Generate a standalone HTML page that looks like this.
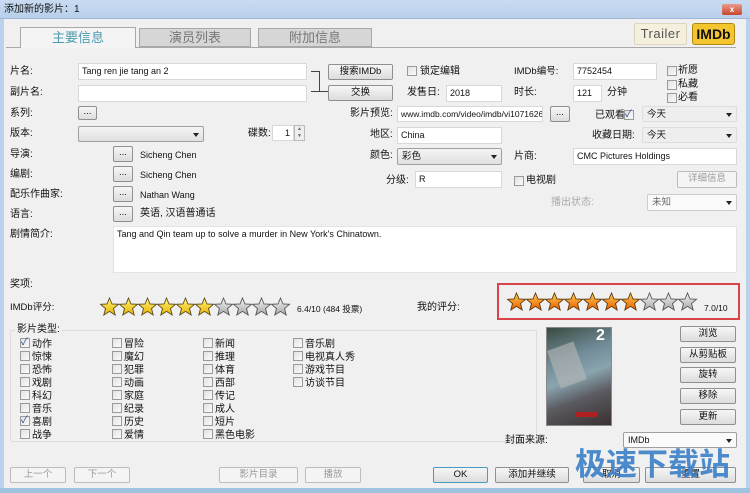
<!DOCTYPE html>
<html><head><meta charset="utf-8"><style>
*{box-sizing:border-box;margin:0;padding:0}
body{width:750px;height:493px;overflow:hidden;background:#f0f0f0;font-family:"Liberation Sans","Noto Sans CJK SC",sans-serif;font-size:10px;line-height:12px;color:#111;position:relative}
.a{position:absolute;white-space:nowrap}
.in{position:absolute;background:#fff;border:1px solid #d8d8d8;padding:2px 3px;font-size:9px;line-height:11px}
.btn{position:absolute;border:1px solid #8e8f8f;border-radius:2px;background:linear-gradient(#f6f6f6,#dcdcdc);text-align:center;font-size:9.5px;line-height:14px}
.dis{color:#9a9a9a;border-color:#bcbcbc;background:#f4f4f4}
.sel{position:absolute;border:1px solid #a0a0a0;border-radius:2px;background:linear-gradient(#f4f4f4,#e0e0e0);font-size:9.5px;padding:1px 4px;line-height:13px}
.sel:after{content:"";position:absolute;right:4px;top:6px;border:3px solid transparent;border-top:4px solid #222}
.cb{position:absolute;width:10px;height:10px;border:1px solid #9a9a9a;background:linear-gradient(135deg,#e2e2e2,#fafafa)}
.ck:after{content:"✓";position:absolute;left:0;top:-2px;font-size:10px;line-height:12px;color:#2a4a9a}
.g{position:absolute;font-size:10px;line-height:12px}
.g .cb{position:relative;display:inline-block;vertical-align:-1px;margin-right:2px}
</style></head><body>
<div class="a" style="left:0;top:0;width:750px;height:19px;background:linear-gradient(#c8dbf2,#b9cfea);border-bottom:1px solid #9fb6d4"></div>
<div class="a" style="left:4px;top:4px;font-size:10px">添加新的影片：1</div>
<div class="a" style="left:722px;top:4px;width:20px;height:11px;background:linear-gradient(#e99a8a,#c8452f);border-radius:2px;color:#fff;font-size:8px;text-align:center;line-height:11px;font-weight:bold">x</div>
<div class="a" style="left:0;top:19px;width:4px;height:474px;background:#bcd2ec"></div>
<div class="a" style="left:746px;top:19px;width:4px;height:474px;background:#bcd2ec"></div>
<div class="a" style="left:0;top:488px;width:750px;height:5px;background:#9fc2e0"></div>
<!-- tabs -->
<div class="a" style="left:6px;top:47px;width:730px;height:1px;background:#a8a8a8"></div>
<div class="a" style="left:20px;top:27px;width:116px;height:21px;background:#f4f4f4;border:1px solid #a8a8a8;border-bottom:none;color:#4a9ab0;font-size:13px;text-align:center;line-height:20px">主要信息</div>
<div class="a" style="left:139px;top:28px;width:112px;height:19px;background:#d6d6d6;border:1px solid #a8a8a8;color:#777;font-size:13px;text-align:center;line-height:18px">演员列表</div>
<div class="a" style="left:258px;top:28px;width:114px;height:19px;background:#d6d6d6;border:1px solid #a8a8a8;color:#777;font-size:13px;text-align:center;line-height:18px">附加信息</div>
<div class="a" style="left:634px;top:23px;width:53px;height:22px;background:#f5f0dd;border:1px solid #ddd6bd;border-radius:2px;font-size:13px;color:#555;text-align:center;line-height:20px;letter-spacing:.5px">Trailer</div>
<div class="a" style="left:692px;top:23px;width:43px;height:22px;background:#f3c52f;border:1px solid #b08a10;border-radius:3px;font-size:14px;font-weight:bold;text-align:center;line-height:20px">IMDb</div>
<!-- left labels -->
<div class="a" style="left:10px;top:66px">片名:</div>
<div class="a" style="left:10px;top:87px">副片名:</div>
<div class="a" style="left:10px;top:108px">系列:</div>
<div class="a" style="left:10px;top:128px">版本:</div>
<div class="a" style="left:10px;top:149px">导演:</div>
<div class="a" style="left:10px;top:169px">编剧:</div>
<div class="a" style="left:10px;top:189px">配乐作曲家:</div>
<div class="a" style="left:10px;top:209px">语言:</div>
<div class="a" style="left:10px;top:229px">剧情简介:</div>
<div class="a" style="left:10px;top:279px">奖项:</div>
<div class="a" style="left:10px;top:302px;font-size:9.5px">IMDb评分:</div>
<div class="in" style="left:78px;top:63px;width:229px;height:17px">Tang ren jie tang an 2</div>
<div class="in" style="left:78px;top:85px;width:229px;height:17px"></div>
<div class="a" style="left:311px;top:71px;width:9px;height:21px;border:1px solid #444;border-left:none"></div>
<div class="a" style="left:320px;top:91px;width:8px;height:1px;background:#444"></div>
<div class="btn" style="left:328px;top:64px;width:65px;height:16px">搜索IMDb</div>
<div class="btn" style="left:328px;top:85px;width:65px;height:16px">交换</div>
<div class="btn" style="left:78px;top:106px;width:19px;height:14px;line-height:10px">...</div>
<div class="sel" style="left:78px;top:126px;width:126px;height:16px"></div>
<div class="a" style="left:248px;top:128px">碟数:</div>
<div class="in" style="left:272px;top:125px;width:22px;height:16px;text-align:right">1</div>
<div class="a" style="left:294px;top:125px;width:11px;height:16px;border:1px solid #bbb;background:#eee;font-size:5px;line-height:7px;text-align:center;color:#666">▲<br>▼</div>
<div class="btn" style="left:113px;top:146px;width:20px;height:16px;line-height:12px">...</div>
<div class="btn" style="left:113px;top:166px;width:20px;height:16px;line-height:12px">...</div>
<div class="btn" style="left:113px;top:186px;width:20px;height:16px;line-height:12px">...</div>
<div class="btn" style="left:113px;top:206px;width:20px;height:16px;line-height:12px">...</div>
<div class="a" style="left:140px;top:149px;font-size:9px">Sicheng Chen</div>
<div class="a" style="left:140px;top:169px;font-size:9px">Sicheng Chen</div>
<div class="a" style="left:140px;top:189px;font-size:9px">Nathan Wang</div>
<div class="a" style="left:140px;top:208px">英语, 汉语普通话</div>
<div class="in" style="left:113px;top:226px;width:624px;height:47px;border-color:#e4e4e4">Tang and Qin team up to solve a murder in New York's Chinatown.</div>
<!-- middle -->
<div class="cb" style="left:407px;top:66px"></div><div class="a" style="left:420px;top:66px">锁定编辑</div>
<div class="a" style="left:407px;top:87px">发售日:</div>
<div class="in" style="left:446px;top:85px;width:56px;height:17px">2018</div>
<div class="a" style="left:350px;top:108px">影片预览:</div>
<div class="in" style="left:397px;top:106px;width:146px;height:16px;font-size:8.5px;overflow:hidden">www.imdb.com/video/imdb/vi10716263</div>
<div class="btn" style="left:550px;top:106px;width:20px;height:16px;line-height:12px">...</div>
<div class="a" style="left:370px;top:129px">地区:</div>
<div class="in" style="left:397px;top:127px;width:105px;height:17px">China</div>
<div class="a" style="left:370px;top:150px">颜色:</div>
<div class="sel" style="left:397px;top:148px;width:105px;height:17px">彩色</div>
<div class="a" style="left:386px;top:175px">分级:</div>
<div class="in" style="left:415px;top:171px;width:87px;height:17px">R</div>
<div class="cb" style="left:514px;top:176px"></div><div class="a" style="left:526px;top:175px">电视剧</div>
<!-- right -->
<div class="a" style="left:514px;top:66px;font-size:9.5px">IMDb编号:</div>
<div class="in" style="left:573px;top:63px;width:84px;height:17px">7752454</div>
<div class="a" style="left:514px;top:87px">时长:</div>
<div class="in" style="left:573px;top:85px;width:29px;height:17px">121</div>
<div class="a" style="left:607px;top:87px">分钟</div>
<div class="cb" style="left:667px;top:66px"></div><div class="a" style="left:678px;top:65px">祈愿</div>
<div class="cb" style="left:667px;top:80px"></div><div class="a" style="left:678px;top:79px">私藏</div>
<div class="cb" style="left:667px;top:93px"></div><div class="a" style="left:678px;top:92px">必看</div>
<div class="a" style="left:595px;top:110px">已观看</div>
<div class="cb ck" style="left:624px;top:110px"></div>
<div class="sel" style="left:642px;top:106px;width:95px;height:16px;border-color:#ddd;background:#eee">今天</div>
<div class="a" style="left:592px;top:130px">收藏日期:</div>
<div class="sel" style="left:642px;top:127px;width:95px;height:16px;border-color:#ddd;background:#eee">今天</div>
<div class="a" style="left:514px;top:151px">片商:</div>
<div class="in" style="left:573px;top:148px;width:164px;height:17px">CMC Pictures Holdings</div>
<div class="btn dis" style="left:677px;top:171px;width:60px;height:17px">详细信息</div>
<div class="a" style="left:551px;top:197px;color:#aaa">播出状态:</div>
<div class="sel" style="left:647px;top:194px;width:90px;height:17px;background:#fafafa;border-color:#ccc;color:#666">未知</div>
<!-- stars -->
<svg class="a" style="left:100px;top:297px" width="195" height="20" viewBox="0 0 195 20">
<defs><polygon id="s" points="9.5,1 12,7 18.5,7.3 13.5,11.5 15.2,18 9.5,14.4 3.8,18 5.5,11.5 0.5,7.3 7,7"/>
<linearGradient id="y" x1="0" y1="0" x2="0" y2="1"><stop offset="0" stop-color="#fff27a"/><stop offset="1" stop-color="#e7b400"/></linearGradient>
<linearGradient id="gr" x1="0" y1="0" x2="0" y2="1"><stop offset="0" stop-color="#f4f4f4"/><stop offset="1" stop-color="#a8a8a8"/></linearGradient>
<linearGradient id="o" x1="0" y1="0" x2="0" y2="1"><stop offset="0" stop-color="#ffd050"/><stop offset="1" stop-color="#e85a00"/></linearGradient></defs>
<g stroke="#5a4a20" stroke-width="0.9">
<use href="#s" x="0" fill="url(#y)"/><use href="#s" x="19" fill="url(#y)"/><use href="#s" x="38" fill="url(#y)"/><use href="#s" x="57" fill="url(#y)"/><use href="#s" x="76" fill="url(#y)"/><use href="#s" x="95" fill="url(#y)"/></g>
<g stroke="#555" stroke-width="0.9"><use href="#s" x="114" fill="url(#gr)"/><use href="#s" x="133" fill="url(#gr)"/><use href="#s" x="152" fill="url(#gr)"/><use href="#s" x="171" fill="url(#gr)"/></g>
</svg>
<div class="a" style="left:297px;top:303px;font-size:8.5px">6.4/10 (484 投票)</div>
<div class="a" style="left:417px;top:302px">我的评分:</div>
<div class="a" style="left:497px;top:283px;width:243px;height:37px;border:2px solid #d9434a"></div>
<svg class="a" style="left:507px;top:292px" width="195" height="20" viewBox="0 0 195 20">
<g stroke="#5a3a10" stroke-width="0.9">
<use href="#s" x="0" fill="url(#o)"/><use href="#s" x="19" fill="url(#o)"/><use href="#s" x="38" fill="url(#o)"/><use href="#s" x="57" fill="url(#o)"/><use href="#s" x="76" fill="url(#o)"/><use href="#s" x="95" fill="url(#o)"/><use href="#s" x="114" fill="url(#o)"/></g>
<g stroke="#555" stroke-width="0.9"><use href="#s" x="133" fill="url(#gr)"/><use href="#s" x="152" fill="url(#gr)"/><use href="#s" x="171" fill="url(#gr)"/></g>
</svg>
<div class="a" style="left:704px;top:302px;font-size:8.5px">7.0/10</div>
<!-- genres -->
<div class="a" style="left:10px;top:330px;width:527px;height:112px;border:1px solid #ddd;border-radius:2px"></div>
<div class="a" style="left:15px;top:324px;background:#f0f0f0;padding:0 2px">影片类型:</div>
<div class="g" style="left:20px;top:338px"><span class="cb ck"></span>动作<br><span class="cb"></span>惊悚<br><span class="cb"></span>恐怖<br><span class="cb"></span>戏剧<br><span class="cb"></span>科幻<br><span class="cb"></span>音乐<br><span class="cb ck"></span>喜剧<br><span class="cb"></span>战争</div>
<div class="g" style="left:112px;top:338px"><span class="cb"></span>冒险<br><span class="cb"></span>魔幻<br><span class="cb"></span>犯罪<br><span class="cb"></span>动画<br><span class="cb"></span>家庭<br><span class="cb"></span>纪录<br><span class="cb"></span>历史<br><span class="cb"></span>爱情</div>
<div class="g" style="left:203px;top:338px"><span class="cb"></span>新闻<br><span class="cb"></span>推理<br><span class="cb"></span>体育<br><span class="cb"></span>西部<br><span class="cb"></span>传记<br><span class="cb"></span>成人<br><span class="cb"></span>短片<br><span class="cb"></span>黑色电影</div>
<div class="g" style="left:293px;top:338px"><span class="cb"></span>音乐剧<br><span class="cb"></span>电视真人秀<br><span class="cb"></span>游戏节目<br><span class="cb"></span>访谈节目</div>
<!-- poster -->
<div class="a" style="left:546px;top:327px;width:66px;height:99px;background:linear-gradient(160deg,#3a4a40 0%,#6f8a96 30%,#8aa4ae 50%,#5a5a60 70%,#3a3030 100%);border:1px solid #888"></div>
<div class="a" style="left:553px;top:345px;width:28px;height:40px;background:#b8b8b8;opacity:.6;transform:rotate(-20deg)"></div>
<div class="a" style="left:596px;top:328px;color:#fff;font-weight:bold;font-size:16px;line-height:16px">2</div>
<div class="a" style="left:575px;top:412px;width:22px;height:5px;background:#b02020"></div>
<div class="btn" style="left:680px;top:326px;width:56px;height:16px">浏览</div>
<div class="btn" style="left:680px;top:347px;width:56px;height:16px">从剪贴板</div>
<div class="btn" style="left:680px;top:367px;width:56px;height:16px">旋转</div>
<div class="btn" style="left:680px;top:388px;width:56px;height:16px">移除</div>
<div class="btn" style="left:680px;top:409px;width:56px;height:16px">更新</div>
<div class="a" style="left:505px;top:435px">封面来源:</div>
<div class="sel" style="left:623px;top:432px;width:114px;height:16px;background:#fafafa;font-size:9px">IMDb</div>
<!-- bottom -->
<div class="btn dis" style="left:10px;top:467px;width:56px;height:16px">上一个</div>
<div class="btn dis" style="left:74px;top:467px;width:56px;height:16px">下一个</div>
<div class="btn dis" style="left:219px;top:467px;width:79px;height:16px">影片目录</div>
<div class="btn dis" style="left:305px;top:467px;width:56px;height:16px">播放</div>
<div class="btn" style="left:433px;top:467px;width:55px;height:16px;border-color:#4a9ac0">OK</div>
<div class="btn" style="left:495px;top:467px;width:74px;height:16px">添加并继续</div>
<div class="btn" style="left:583px;top:467px;width:57px;height:16px">取消</div>
<div class="btn" style="left:645px;top:467px;width:91px;height:16px">重置</div>
<div class="a" style="left:575px;top:447px;font-size:31px;line-height:36px;font-weight:bold;color:#3a7fc8;opacity:.9">极速下载站</div>
</body></html>
